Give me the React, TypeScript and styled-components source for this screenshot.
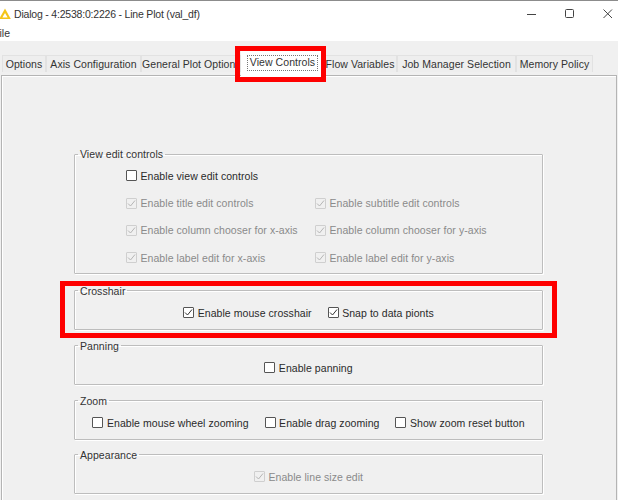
import React from "react";
import styled, { createGlobalStyle } from "styled-components";

const Global = createGlobalStyle`
  html, body { margin: 0; padding: 0; background: #fff; overflow: hidden; }
  #root { width: 618px; height: 500px; overflow: hidden; }
`;

const Window = styled.div`
  position: relative;
  width: 618px;
  height: 500px;
  overflow: hidden;
  background: #fff;
  border-top: 1px solid #8c8c8c;
  box-sizing: border-box;
  font-family: "Liberation Sans", Arial, sans-serif;
  font-size: 10.5px;
  letter-spacing: 0.06px;
  color: #222;
`;

const TitleBar = styled.div`
  display: flex;
  align-items: center;
  height: 25px;
  letter-spacing: -0.2px;
  color: #333;
`;

const AppIcon = styled.svg`
  width: 12px;
  height: 12px;
  margin-right: 2px;
  flex: none;
`;

const WindowButtons = styled.div`
  display: flex;
  margin-left: auto;
  margin-right: 4px;
  gap: 26px;
  align-items: center;
`;

const WinIcon = styled.svg`
  width: 12px;
  height: 12px;
  display: block;
`;

const MenuBar = styled.div`
  height: 15px;
  line-height: 15px;
  margin-left: -7px;
  color: #333;
`;

const Content = styled.div`
  background: #f0f0f0;
  height: 459px;
  padding: 14px 1px 0 1px;
  box-sizing: border-box;
`;

const TabRow = styled.div`
  display: flex;
  height: 20px;
  padding-left: 1px;
  align-items: flex-end;
`;

const Tab = styled.div<{ $width: number }>`
  width: ${(p) => p.$width}px;
  height: 17px;
  margin-bottom: 3px;
  box-sizing: border-box;
  flex: none;
  text-align: center;
  white-space: nowrap;
  overflow: hidden;
  line-height: 16px;
  border: 1px solid #e2e2e2;
  border-bottom: none;
  background: #eeeeee;
  color: #333;
`;

const ActiveTab = styled.div<{ $width: number }>`
  width: ${(p) => p.$width}px;
  height: 25px;
  flex: none;
  box-sizing: border-box;
  margin-bottom: -1px;
  padding: 4px 5px 0 6px;
  background: #fff;
  position: relative;
  z-index: 1;
`;

const FocusBox = styled.div`
  height: 16px;
  box-sizing: border-box;
  border: 1px dotted #777;
  line-height: 12px;
  text-align: center;
  white-space: nowrap;
  color: #333;
`;

const Panel = styled.div`
  height: 430px;
  border: 1px solid #b4b4b4;
  box-shadow: inset 1px 1px 0 #fff;
  box-sizing: border-box;
  padding: 71px 73px 0 72px;
`;

const Group = styled.fieldset<{ $gap?: number }>`
  margin: 0 0 ${(p) => p.$gap ?? 9}px;
  padding: 0;
  min-width: 0;
  border: 1px solid #bdbdbd;
  border-radius: 1px;
  box-shadow: 1px 1px 0 #fff, inset 1px 1px 0 #fff;
`;

const Legend = styled.legend`
  margin-left: 3px;
  padding: 0 2px;
  height: 14px;
  line-height: 14px;
  color: #333;
`;

const Grid = styled.div`
  display: grid;
  grid-template-columns: 189px 1fr;
  grid-auto-rows: 27.4px;
  padding: 1px 0 1px 51px;
  align-items: center;
`;

const Row = styled.div`
  display: flex;
  justify-content: center;
  align-items: center;
  gap: 16px;
  height: 22px;
  padding: 4px 0 5px;
`;

const Option = styled.label<{ $off?: boolean }>`
  display: flex;
  align-items: center;
  gap: 3.5px;
  white-space: nowrap;
  color: ${(p) => (p.$off ? "#8a8a8a" : "#2a2a2a")};
`;

const Box = styled.span<{ $off?: boolean }>`
  display: flex;
  width: 11px;
  height: 11px;
  box-sizing: border-box;
  flex: none;
  border: 1px solid ${(p) => (p.$off ? "#cfcfcf" : "#555")};
  border-radius: 1px;
  background: ${(p) => (p.$off ? "#f0f0f0" : "#fff")};
`;

const Tick = styled.svg<{ $off?: boolean }>`
  width: 9px;
  height: 9px;
  fill: none;
  stroke: ${(p) => (p.$off ? "#b5b5b5" : "#333")};
  stroke-width: 1;
`;

const Highlight = styled.div<{ $x: number; $y: number; $w: number; $h: number }>`
  position: absolute;
  left: ${(p) => p.$x}px;
  top: ${(p) => p.$y}px;
  width: ${(p) => p.$w}px;
  height: ${(p) => p.$h}px;
  box-sizing: border-box;
  border: 5px solid #fe0000;
  pointer-events: none;
  z-index: 2;
`;

const Check = ({ label, checked, off }: { label: string; checked?: boolean; off?: boolean }) => (
  <Option $off={off}>
    <Box $off={off}>
      {checked && (
        <Tick $off={off} viewBox="0 0 9 9">
          <path d="M1 4.5 L3.5 7 L8 1.5" />
        </Tick>
      )}
    </Box>
    {label}
  </Option>
);

export default function App() {
  return (
    <Window>
      <Global />
      <TitleBar>
        <AppIcon viewBox="0 0 12 12">
          <path d="M5 0.5 L10.8 11 L-0.8 11 Z" fill="#f5c518" />
          <path d="M5 5 L7.6 9.5 L2.4 9.5 Z" fill="#fff" />
        </AppIcon>
        Dialog - 4:2538:0:2226 - Line Plot (val_df)
        <WindowButtons>
          <WinIcon viewBox="0 0 12 12">
            <path d="M1 6.5 H10" stroke="#444" strokeWidth="1" />
          </WinIcon>
          <WinIcon viewBox="0 0 12 12">
            <rect x="1.5" y="1.5" width="8" height="8" rx="1" fill="none" stroke="#444" />
          </WinIcon>
          <WinIcon viewBox="0 0 12 12">
            <path d="M1.5 1.5 L10 10 M10 1.5 L1.5 10" stroke="#444" strokeWidth="1" />
          </WinIcon>
        </WindowButtons>
      </TitleBar>
      <MenuBar>File</MenuBar>
      <Content>
        <TabRow>
          <Tab $width={44}>Options</Tab>
          <Tab $width={95}>Axis Configuration</Tab>
          <Tab $width={100}>General Plot Options</Tab>
          <ActiveTab $width={82}>
            <FocusBox>View Controls</FocusBox>
          </ActiveTab>
          <Tab $width={74}>Flow Variables</Tab>
          <Tab $width={119}>Job Manager Selection</Tab>
          <Tab $width={77}>Memory Policy</Tab>
        </TabRow>
        <Panel>
          <Group $gap={10}>
            <Legend>View edit controls</Legend>
            <Grid>
              <Check label="Enable view edit controls" />
              <span />
              <Check off checked label="Enable title edit controls" />
              <Check off checked label="Enable subtitle edit controls" />
              <Check off checked label="Enable column chooser for x-axis" />
              <Check off checked label="Enable column chooser for y-axis" />
              <Check off checked label="Enable label edit for x-axis" />
              <Check off checked label="Enable label edit for y-axis" />
            </Grid>
          </Group>
          <Group>
            <Legend>Crosshair</Legend>
            <Row>
              <Check checked label="Enable mouse crosshair" />
              <Check checked label="Snap to data pionts" />
            </Row>
          </Group>
          <Group>
            <Legend>Panning</Legend>
            <Row>
              <Check label="Enable panning" />
            </Row>
          </Group>
          <Group $gap={8}>
            <Legend>Zoom</Legend>
            <Row>
              <Check label="Enable mouse wheel zooming" />
              <Check label="Enable drag zooming" />
              <Check label="Show zoom reset button" />
            </Row>
          </Group>
          <Group>
            <Legend>Appearance</Legend>
            <Row>
              <Check off checked label="Enable line size edit" />
            </Row>
          </Group>
        </Panel>
      </Content>
      <Highlight $x={235} $y={45} $w={91} $h={36} />
      <Highlight $x={60} $y={280} $w={497} $h={57} />
    </Window>
  );
}
